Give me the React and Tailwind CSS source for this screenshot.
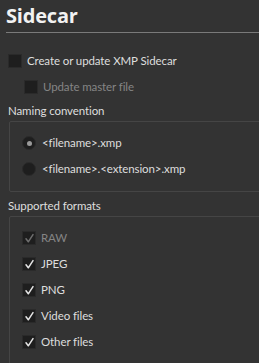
import React from "react";

const Check = ({ color }) => (
  <svg width="11" height="11" viewBox="0 0 11 11" fill="none">
    <path d="M2 5.8 L4.3 8.8 L9 1.6" stroke={color} strokeWidth="1.5" strokeLinecap="round" strokeLinejoin="round" />
  </svg>
);

const Box = ({ checked, disabled }) => (
  <span className="w-[14px] h-[14px] shrink-0 bg-[#1e1e1e] border border-[#2a2a2a] flex items-center justify-center">
    {checked && <Check color={disabled ? "#6f6f6f" : "#e6e6e6"} />}
  </span>
);

const Radio = ({ selected }) => (
  <span className="w-[14px] h-[14px] shrink-0 rounded-full bg-[#1e1e1e] border border-[#2a2a2a] flex items-center justify-center">
    {selected && <span className="w-[5px] h-[5px] rounded-full bg-[#9a9a9a]" />}
  </span>
);

const formats = [
  { name: "RAW", disabled: true },
  { name: "JPEG" },
  { name: "PNG" },
  { name: "Video files" },
  { name: "Other files" },
];

const App = () => {
  return (
    <div
      className="w-[259px] h-[363px] bg-[#333333] overflow-hidden text-[11.5px] tracking-[-0.1px] text-[#dedede]"
      style={{ fontFamily: 'Lato, "Noto Sans", sans-serif' }}
    >
      <div className="ml-[6px] h-[33px] border-b border-[#7a7a7a] flex items-center">
        <h1
          className="text-[20px] font-bold text-[#f2f2f2] leading-none tracking-[-0.2px]"
          style={{ fontFamily: '"Open Sans", sans-serif' }}
        >
          Sidecar
        </h1>
      </div>

      <div className="mt-[15px] pl-[8px] h-[26px] flex items-center gap-[5px]">
        <Box />
        <span>Create or update XMP Sidecar</span>
      </div>
      <div className="pl-[24px] h-[26px] flex items-center gap-[5px]">
        <Box />
        <span className="text-[#858585]">Update master file</span>
      </div>

      <div className="mt-[1px] pl-[8px] h-[20px] flex items-center">Naming convention</div>
      <div className="ml-[9px] -mr-[4px] border border-[#454545] rounded-[2px] pl-[12px] pt-[8px] pb-[9px]">
        <div className="h-[26px] flex items-center gap-[6px]">
          <Radio selected />
          <span>&lt;filename&gt;.xmp</span>
        </div>
        <div className="h-[26px] flex items-center gap-[6px]">
          <Radio />
          <span>&lt;filename&gt;.&lt;extension&gt;.xmp</span>
        </div>
      </div>

      <div className="mt-[4px] pl-[8px] h-[20px] flex items-center">Supported formats</div>
      <div className="ml-[9px] -mr-[4px] border border-[#454545] rounded-[2px] pl-[12px] pt-[8px] pb-[20px]">
        {formats.map((f) => (
          <div key={f.name} className="h-[26px] flex items-center gap-[5px]">
            <Box checked disabled={f.disabled} />
            <span className={f.disabled ? "text-[#858585]" : ""}>{f.name}</span>
          </div>
        ))}
      </div>
    </div>
  );
};

export default App;
